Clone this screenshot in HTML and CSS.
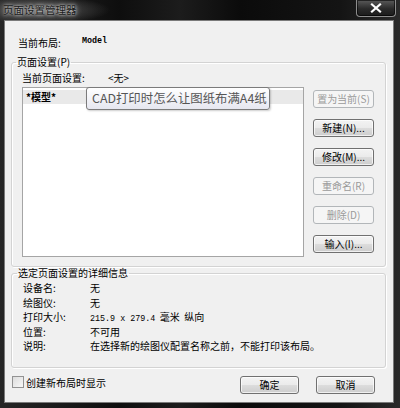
FILE: index.html
```html
<!DOCTYPE html>
<html lang="zh-CN">
<head>
<meta charset="utf-8">
<title>页面设置管理器</title>
<link rel="stylesheet" href="styles.css">
</head>
<body>
<div class="window">
  <div class="titlebar">
    <span class="title">页面设置管理器</span>
    <span class="close"><svg width="12" height="10" viewBox="0 0 12 10"><path d="M2 1.5 L10 8.5 M10 1.5 L2 8.5" stroke="#fff" stroke-width="2.2" stroke-linecap="square"/></svg></span>
  </div>
  <div class="client">
    <div class="layout-row"><span>当前布局:</span><span class="mono bold">Model</span></div>

    <fieldset class="group g1">
      <legend>页面设置(P)</legend>
      <div class="cur-row"><span>当前页面设置:</span><span>&lt;无&gt;</span></div>
      <div class="g1-body">
        <div class="list">
          <div class="item sel">*模型*</div>
          <div class="tooltip">CAD打印时怎么让图纸布满A4纸</div>
        </div>
        <div class="btns">
          <button class="btn disabled">置为当前(S)</button>
          <button class="btn">新建(N)...</button>
          <button class="btn">修改(M)...</button>
          <button class="btn disabled">重命名(R)</button>
          <button class="btn disabled">删除(D)</button>
          <button class="btn">输入(I)...</button>
        </div>
      </div>
    </fieldset>

    <fieldset class="group g2">
      <legend>选定页面设置的详细信息</legend>
      <div class="details">
        <span>设备名:</span><span>无</span>
        <span>绘图仪:</span><span>无</span>
        <span>打印大小:</span><span><span class="mono">215.9 x 279.4</span>&nbsp; 毫米&nbsp; 纵向</span>
        <span>位置:</span><span>不可用</span>
        <span>说明:</span><span>在选择新的绘图仪配置名称之前，不能打印该布局。</span>
      </div>
    </fieldset>

    <div class="footer">
      <label class="check"><span class="box"></span><span>创建新布局时显示</span></label>
      <div class="fbtns">
        <button class="btn wide">确定</button>
        <button class="btn wide">取消</button>
      </div>
    </div>
  </div>
</div>
</body>
</html>
```
FILE: styles.css
```css
* { box-sizing: border-box; }
html, body { margin: 0; padding: 0; }
body {
  width: 400px;
  height: 408px;
  overflow: hidden;
  background: #151515;
  font-family: "Noto Sans CJK SC", "Liberation Sans", sans-serif;
  font-size: 10px;
  color: #000;
}
.window {
  width: 400px;
  height: 408px;
  display: flex;
  flex-direction: column;
  background:
    radial-gradient(ellipse 70px 14px at 40px 10px, rgba(150,150,150,0.55), rgba(80,80,80,0) 100%),
    linear-gradient(90deg, #262626 0%, #0e0e0e 30%, #1c1c1c 45%, #0b0b0b 60%, #141414 85%, #2a2a2a 100%);
}
.titlebar {
  height: 20px;
  flex: none;
  display: flex;
  justify-content: space-between;
  align-items: flex-start;
  padding: 0 4px 0 3px;
}
.title {
  margin-top: 4px;
  font-size: 10.5px;
  line-height: 12px;
  color: #1c1c1c;
  text-shadow: 0 0 3px #d8d8d8, 0 0 6px #bbb;
}
.close {
  width: 40px;
  height: 17px;
  display: flex;
  align-items: center;
  justify-content: center;
  border: 1px solid #8d8d8d;
  border-top: none;
  border-radius: 0 0 4px 4px;
  background: linear-gradient(#5a5a5a, #2a2a2a 55%, #1a1a1a);
  box-shadow: inset 0 0 0 1px rgba(0,0,0,0.6);
}
.client {
  flex: 1;
  margin: 0 6px 5px 4px;
  background: #f0f0f0;
  border: 1px solid #7a7a7a;
  display: flex;
  flex-direction: column;
}
.mono { font-family: "Liberation Mono", "DejaVu Sans Mono", monospace; font-size: 8.4px; line-height: 1; }
.bold { font-weight: bold; }
.layout-row {
  margin-top: 16px;
  padding-left: 13px;
  height: 12px;
  line-height: 12px;
  display: grid;
  grid-template-columns: 64px auto;
}
.group {
  margin: 0 7px 0 6px;
  border: 1px solid #d3d3d3;
  border-radius: 3px;
  box-shadow: inset 1px 1px 0 #fff, 1px 1px 0 #fff;
  min-width: 0;
}
.group legend {
  padding: 0 1px;
  margin-left: -6px;
  line-height: 12px;
  height: 12px;
}
.g1 {
  margin-top: 7px;
  padding: 0 11px 9px 10px;
}
.cur-row {
  margin-top: 4px;
  height: 12px;
  line-height: 12px;
  display: grid;
  grid-template-columns: 86px auto;
}
.g1-body {
  margin-top: 3px;
  display: flex;
  gap: 9px;
}
.list {
  position: relative;
  width: 282px;
  height: 170px;
  background: #fff;
  border: 1px solid #a5a5a5;
  padding: 1px 0;
}
.item {
  height: 14px;
  line-height: 14px;
  padding-left: 3px;
  font-weight: bold;
}
.item.sel { background: #e9e9e9; margin-top: 1px; }
.tooltip {
  position: absolute;
  left: 63px;
  top: -1px;
  width: 184px;
  height: 23px;
  padding-left: 5px;
  line-height: 21px;
  font-size: 12.4px;
  color: #555;
  background: linear-gradient(#ffffff, #e6e7f0);
  border: 1px solid #7b7b7b;
  border-radius: 3px;
  box-shadow: 1px 1px 2px rgba(0,0,0,0.2);
  white-space: nowrap;
}
.btns {
  width: 61px;
  padding-top: 3px;
  display: flex;
  flex-direction: column;
  gap: 11px;
}
.btn {
  height: 18px;
  padding: 0;
  font-family: inherit;
  font-size: 10px;
  line-height: 16px;
  color: #000;
  border: 1px solid #707070;
  border-radius: 3px;
  background: linear-gradient(#f3f3f3 0%, #ebebeb 48%, #dcdcdc 52%, #cdcdcd 100%);
  box-shadow: inset 0 0 0 1px rgba(255,255,255,0.7);
  white-space: nowrap;
}
.btn.disabled {
  color: #9a9a9a;
  border-color: #b2b6b9;
  background: #f5f5f5;
  box-shadow: none;
}
.g2 {
  padding: 0 8px 13px 11px;
}
.details {
  padding-top: 2px;
  display: grid;
  grid-template-columns: 67px auto;
  grid-auto-rows: 14.5px;
  line-height: 14.5px;
}
.details > span { height: 14.5px; white-space: nowrap; }
.footer {
  margin-top: 8px;
  padding: 0 18px 0 7px;
  display: flex;
  justify-content: space-between;
  align-items: flex-start;
}
.check {
  display: flex;
  align-items: center;
  gap: 2px;
  height: 13px;
  line-height: 13px;
}
.box {
  width: 12px;
  height: 12px;
  border: 1px solid #929292;
  background: linear-gradient(135deg, #dcdcdc, #f8f8f8);
}
.fbtns {
  display: flex;
  gap: 17px;
}
.btn.wide { width: 59px; }
```
